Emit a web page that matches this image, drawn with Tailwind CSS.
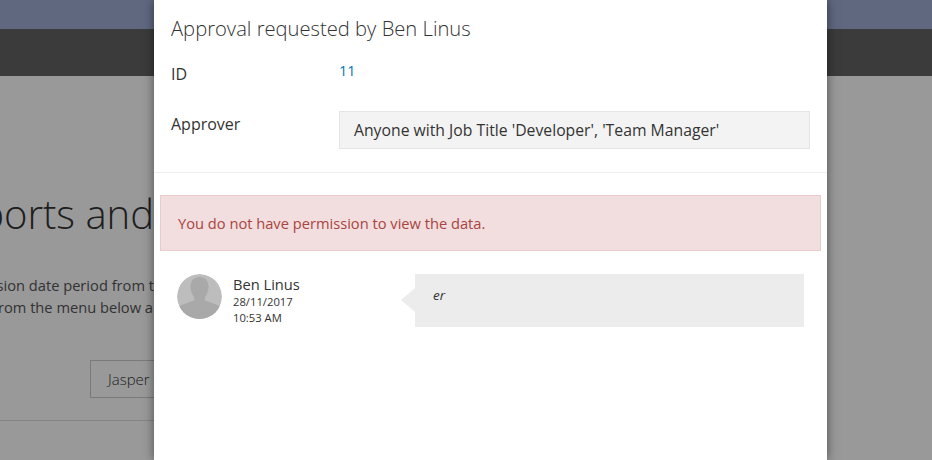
<!DOCTYPE html>
<html>
<head>
<meta charset="utf-8">
<script src="https://cdn.jsdelivr.net/npm/@tailwindcss/browser@4"></script>
</head>
<body class="m-0">
<div class="relative w-[932px] h-[460px] overflow-hidden bg-white font-['Open_Sans',sans-serif] text-[#333]">
  <div class="flex flex-col h-full">
    <div class="h-[29px] bg-[#a0adD5]"></div>
    <div class="h-[47px] bg-[#636363]"></div>
    <div class="flex-1 bg-white"></div>
  </div>
  <div class="absolute right-[778px] top-[184px] whitespace-nowrap text-[40px] font-light leading-[60px] text-[#333]">Reports and</div>
  <div class="absolute right-[778px] top-[274px] whitespace-nowrap text-[14.67px] leading-[22px] text-right text-[#555]">
    <span class="block">submission date period from t</span>
    <span class="block mr-[1px]">Choose from the menu below a</span>
  </div>
  <div class="absolute left-[90px] top-[360px] w-[80px] h-[38px] border border-[#ccc] pl-[17px] text-[15px] font-light leading-[36px] text-[#333]">Jasper</div>
  <div class="absolute left-0 top-[420px] w-[154px] h-px bg-[#ddd]"></div>
  <div class="absolute inset-0 bg-black/40"></div>
  <div class="absolute left-[154px] top-0 w-[673px] h-full bg-white shadow-[0_0_10px_rgba(0,0,0,0.5)] flex flex-col">
    <div class="h-[173px] border-b border-[#eee] pl-[17px] pr-[17px]">
      <h4 class="text-[20.2px] font-light leading-[26px] pt-[15px] m-0 text-[#333]">Approval requested by Ben Linus</h4>
      <div class="flex mt-[21px] h-[38px]">
        <div class="w-[168px] text-[16px] leading-[24px]">ID</div>
        <div class="text-[14.5px] leading-[18px] text-[#0078b0]">11</div>
      </div>
      <div class="flex mt-[11px]">
        <div class="w-[168px] text-[16px] leading-[24px] pt-[1px]">Approver</div>
        <div class="w-[471px] h-[38px] border border-[#e5e5e5] bg-[#f3f3f3] pl-[14px] text-[15.75px] leading-[36px]">Anyone with Job Title 'Developer', 'Team Manager'</div>
      </div>
    </div>
    <div class="mx-[6px] mt-[22px] h-[56px] w-[661px] border border-[#ebcccc] bg-[#f2dede] pl-[17px] text-[14.67px] leading-[54px] text-[#a94442]">You do not have permission to view the data.</div>
    <div class="flex mt-[23px] pl-[23px]">
      <svg class="w-[45px] h-[45px] rounded-full" viewBox="0 0 45 45">
        <circle cx="22.5" cy="22.5" r="22.500" fill="#bdbdbd"/>
        <path d="M13.500 13c0-6.500 3.500-10 9-10s9 3.500 9 10c0 4-1.500 7-3.500 10v3.500l12.500 4.500 3.500 2a22.500 22.500 0 0 1-43 0l3.500-2 12.500-4.500v-3.500c-2-3-3.500-6-3.500-10z" fill="#a9a9a9"/>
      </svg>
      <div class="ml-[11px] w-[182px]">
        <div class="text-[14.67px] leading-[20px]">Ben Linus</div>
        <div class="text-[11.25px] leading-[16px]">28/11/2017</div>
        <div class="text-[11.25px] leading-[16px]">10:53 AM</div>
      </div>
      <div class="relative w-[389px] h-[53px] bg-[#ececec] pl-[18px] pt-[12px] text-[13.5px] leading-[18px] italic">er
        <span class="absolute left-[-14px] top-[14px] border-y-[12px] border-r-[14px] border-y-transparent border-r-[#ececec]"></span>
      </div>
    </div>
  </div>
</div>
</body>
</html>
